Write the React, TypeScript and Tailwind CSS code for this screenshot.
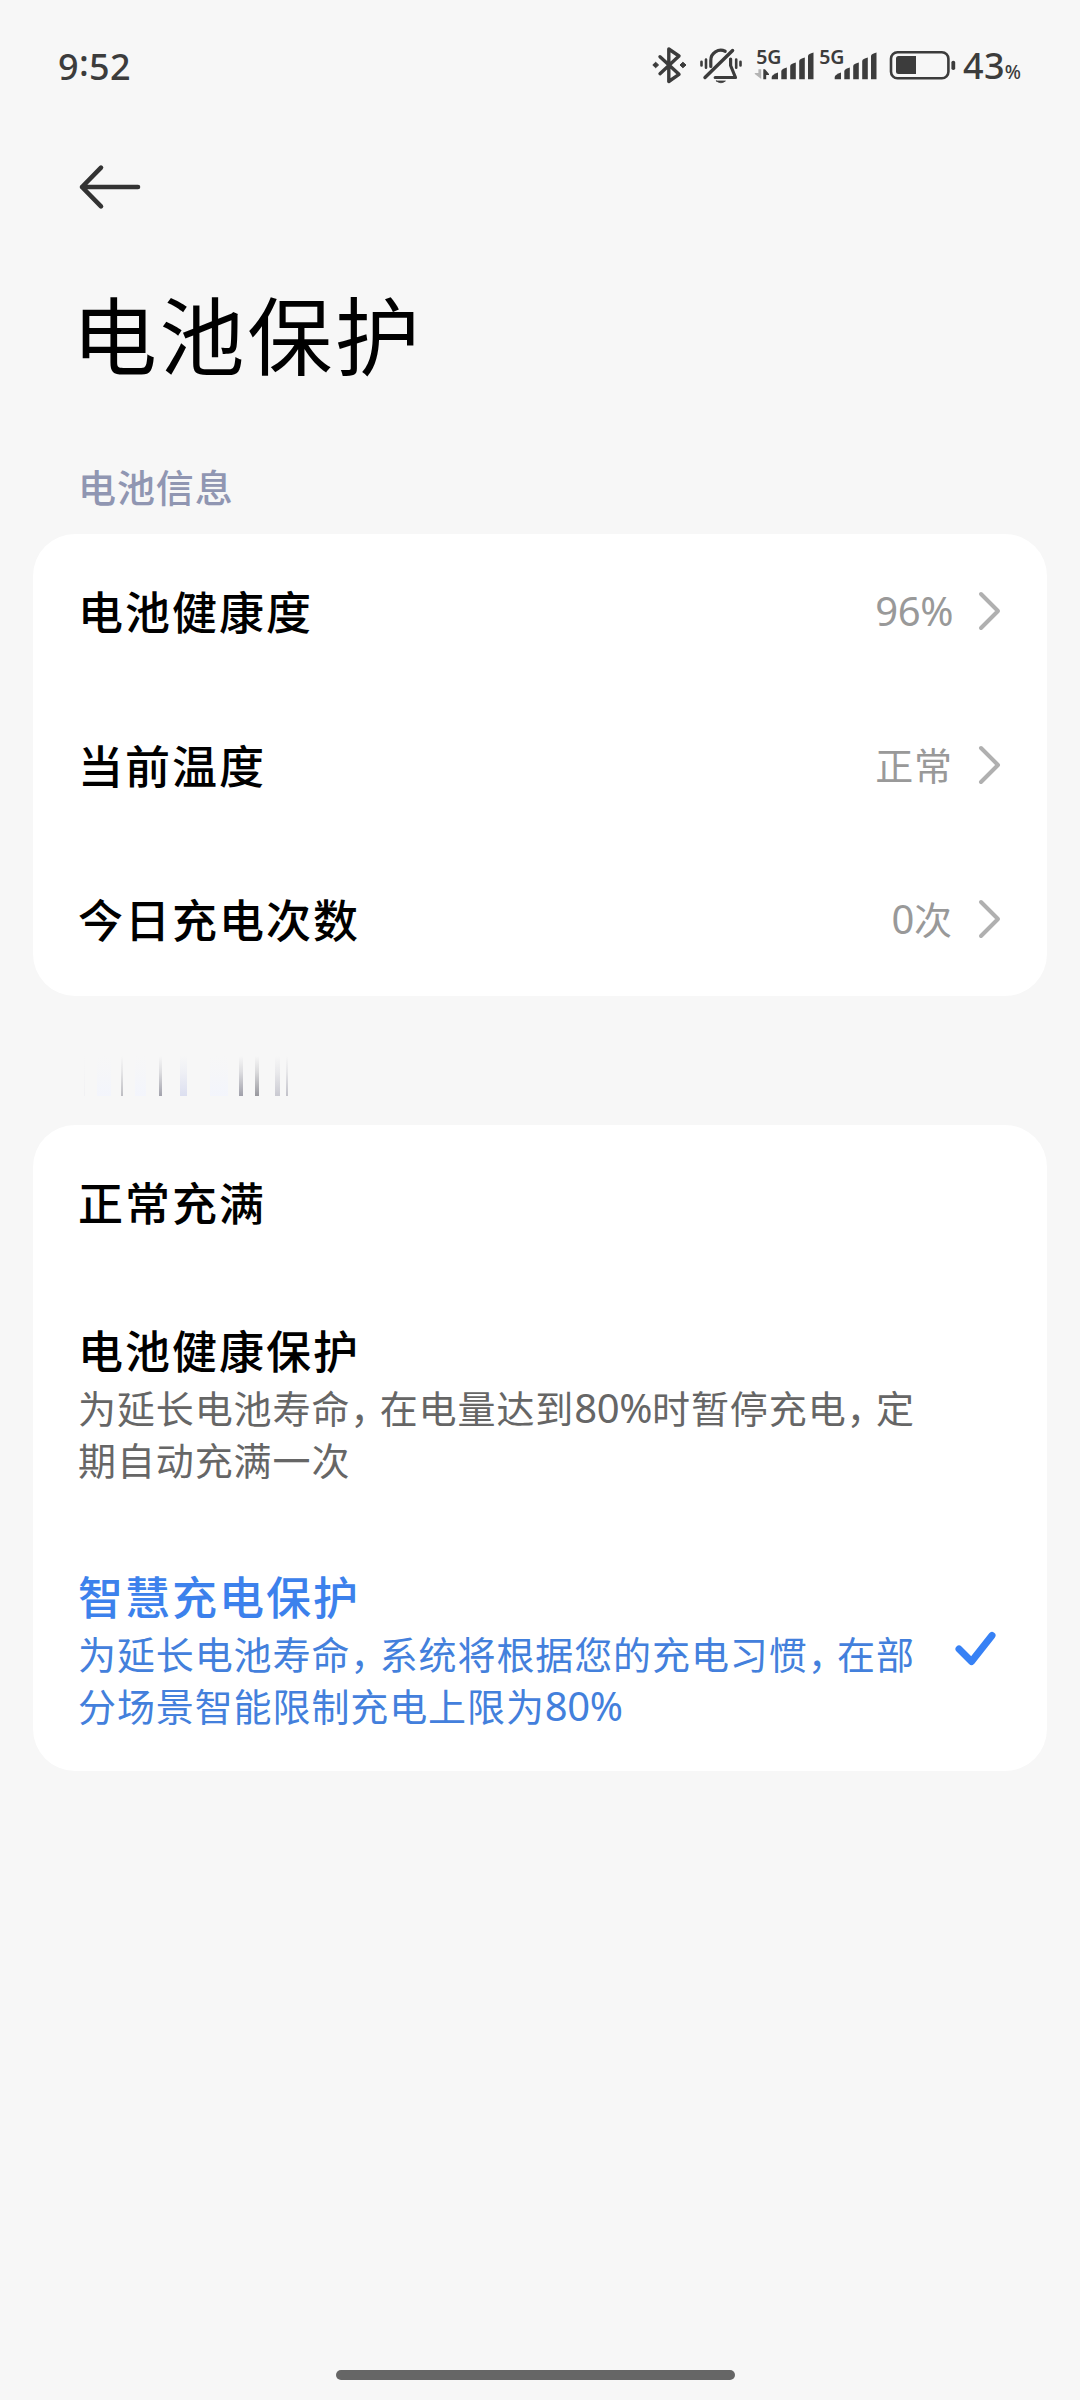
import { Fragment } from 'react';
import clsx from 'clsx';

const infoRows = [
  { label: '电池健康度', value: '96%' },
  { label: '当前温度', value: '正常' },
  { label: '今日充电次数', value: '0次' },
];

const modes = [
  { title: '正常充满', lines: [], selected: false },
  {
    title: '电池健康保护',
    lines: ['为延长电池寿命，在电量达到80%时暂停充电，定', '期自动充满一次'],
    selected: false,
  },
  {
    title: '智慧充电保护',
    lines: ['为延长电池寿命，系统将根据您的充电习惯，在部', '分场景智能限制充电上限为80%'],
    selected: true,
  },
];

export default function App() {
  return (
    <div className="flex h-[2400px] w-[1080px] flex-col overflow-hidden bg-[#f7f7f7] font-['Noto_Sans','Noto_Sans_CJK_SC',sans-serif] text-black">
      <StatusBar />

      <header className="pl-[76px] pt-[30px]">
        <BackArrow />
        <h1 className="-ml-[4px] mt-[58px] font-['Noto_Sans_CJK_SC',sans-serif] text-[85px] leading-[120px] tracking-[2.6px]">
          电池保护
        </h1>
      </header>

      <main className="mt-[68px] px-[33px]">
        <h2 className="pl-[45px] font-['Noto_Sans_CJK_SC',sans-serif] text-[38px] font-medium leading-[52px] tracking-[0.9px] text-[#9096b2]">
          电池信息
        </h2>

        <section className="mt-[22px] rounded-[42px] bg-white">
          {infoRows.map((row) => (
            <InfoRow key={row.label} {...row} />
          ))}
        </section>

        <FadedLabel />

        <section className="rounded-[42px] bg-white">
          {modes.map((mode) => (
            <ModeRow key={mode.title} {...mode} />
          ))}
        </section>
      </main>

      <div className="mb-[20px] ml-[336px] mt-auto h-[10px] w-[399px] rounded-full bg-[#666]" />
    </div>
  );
}

function StatusBar() {
  return (
    <div className="flex h-[130px] items-center pl-[58px] pt-[2px] text-[#3c3c3c]">
      <div className="flex w-[594px] pt-[1px] text-[36px] font-medium leading-[40px] tracking-[0.3px]">
        <span>9</span>
        <span className="-mt-[4px]">:</span>
        <span>52</span>
      </div>
      <BluetoothIcon />
      <BellOffIcon />
      <SignalIcon active />
      <SignalIcon />
      <BatteryIcon />
      <div className="ml-[4px] flex items-baseline pt-[5px] font-medium leading-[40px]">
        <span className="text-[36px] tracking-[0.3px]">43</span>
        <span className="text-[19px]">%</span>
      </div>
    </div>
  );
}

function InfoRow({ label, value }: { label: string; value: string }) {
  return (
    <div className="flex h-[154px] items-center pl-[45px] pr-[44px]">
      <span className="flex-1 font-['Noto_Sans_CJK_SC',sans-serif] text-[45px] font-medium tracking-[2px]">{label}</span>
      <span className="text-[38px] tracking-[0.9px] text-[#999]">
        <MixedText text={value} />
      </span>
      <svg className="ml-[24px]" width="26" height="42" viewBox="0 0 26 42" fill="none">
        <path d="M4 4L21 21L4 38" stroke="#b0b0b0" strokeWidth="4" strokeLinecap="round" strokeLinejoin="round" />
      </svg>
    </div>
  );
}

function ModeRow({ title, lines, selected }: { title: string; lines: string[]; selected: boolean }) {
  const simple = lines.length === 0;
  return (
    <div className={clsx('flex items-center pl-[45px] pr-[49px]', simple ? 'h-[154px]' : 'h-[246px]')}>
      <div className={clsx('flex-1', !simple && 'pt-[2px]')}>
        <div
          className={clsx(
            "font-['Noto_Sans_CJK_SC',sans-serif] text-[45px] font-medium leading-[60px] tracking-[2px]",
            !simple && 'mb-[2px]',
            selected && 'text-[#3c81ec]',
          )}
        >
          {title}
        </div>
        {lines.map((line) => (
          <div
            key={line}
            className={clsx(
              'h-[52px] whitespace-nowrap text-[38px] leading-[52px] tracking-[0.9px]',
              selected ? 'text-[#4380dc]' : 'text-[#666]',
            )}
          >
            <MixedText text={line} />
          </div>
        ))}
      </div>
      {selected && (
        <svg width="46" height="40" viewBox="0 0 46 40" fill="none">
          <path d="M7 21L19.5 33.5L40 7.5" stroke="#3781f5" strokeWidth="7" strokeLinecap="round" strokeLinejoin="round" />
        </svg>
      )}
    </div>
  );
}

// Numbers are set slightly larger than the hanzi, and full-width commas are tightened.
function MixedText({ text }: { text: string }) {
  return (
    <>
      {text.split(/(\d+%?|，)/).map((part, i) => {
        if (part === '，') return <span key={i} className="tracking-[-8.6px]">{part}</span>;
        if (/\d/.test(part)) return <span key={i} className="text-[40px] tracking-[-0.4px]">{part}</span>;
        return <Fragment key={i}>{part}</Fragment>;
      })}
    </>
  );
}

const streaks = [
  { x: 6, w: 1, color: '#f1f1f3' },
  { x: 19, w: 14, color: '#f3f5fc' },
  { x: 43, w: 2, color: '#bdbdc2' },
  { x: 57, w: 11, color: '#f3f5fc' },
  { x: 81, w: 3, color: '#a2a2ac' },
  { x: 102, w: 7, color: '#dcdff0' },
  { x: 132, w: 18, color: '#f3f5fc' },
  { x: 161, w: 4, color: '#a0a0aa' },
  { x: 177, w: 4, color: '#98989e' },
  { x: 197, w: 5, color: '#cacad2' },
  { x: 208, w: 2, color: '#c2c2ca' },
];

// Section label that is still fading in: only its vertical strokes show.
function FadedLabel() {
  return (
    <div className="h-[129px] pl-[45px] pt-[60px]">
      <svg width="240" height="40" viewBox="0 0 240 40">
        <defs>
          <linearGradient id="reveal" x1="0" y1="0" x2="0" y2="1">
            <stop offset="0" stopColor="#f7f7f7" />
            <stop offset="0.4" stopColor="#f7f7f7" stopOpacity="0.7" />
            <stop offset="1" stopColor="#f7f7f7" stopOpacity="0" />
          </linearGradient>
        </defs>
        {streaks.map((s) => (
          <rect key={s.x} x={s.x} y="0" width={s.w} height="40" fill={s.color} />
        ))}
        <rect width="240" height="40" fill="url(#reveal)" />
      </svg>
    </div>
  );
}

function BackArrow() {
  return (
    <svg width="70" height="54" viewBox="0 0 70 54" fill="none" stroke="#333" strokeWidth="4.6" strokeLinecap="round" strokeLinejoin="round">
      <path d="M25 7.7L6 27L25 46.3M6 27H62" />
    </svg>
  );
}

function BluetoothIcon() {
  return (
    <svg width="36" height="40" viewBox="0 0 36 40" fill="none">
      <path d="M8 10.7L27 28.3L16.8 35.5V3L27 10L8 27.7" stroke="currentColor" strokeWidth="3.4" strokeLinecap="round" strokeLinejoin="round" />
      <path d="M3.6 16.2L6.6 19L3.6 21.8L0.8 19ZM30.9 16.2L34 19L30.9 21.8L28 19Z" fill="currentColor" stroke="currentColor" strokeLinejoin="round" />
    </svg>
  );
}

function BellOffIcon() {
  return (
    <svg className="ml-[12px]" width="42" height="40" viewBox="0 0 42 40" fill="none" stroke="currentColor" strokeLinecap="round" strokeLinejoin="round">
      <path d="M5 31.5L32.6 4.5" strokeWidth="3.4" />
      <path d="M10.8 20.5V14.5A10 10 0 0 1 25.2 5.3" strokeWidth="3.2" />
      <path d="M30.6 13V19.5L35.5 31.5H15.2" strokeWidth="3.2" />
      <path d="M16.4 35H25.4Q21 38.6 16.4 35Z" fill="currentColor" strokeWidth="0.8" />
      <path d="M1.5 15.8V19.4M6 13.5V21.8M36.2 13.5V21.8M40.5 15.8V19.4" strokeWidth="2.6" />
    </svg>
  );
}

function SignalIcon({ active }: { active?: boolean }) {
  return (
    <svg
      className={clsx('overflow-visible', active ? 'ml-[12px]' : 'ml-[3px]')}
      width="60"
      height="40"
      viewBox="0 0 60 40"
      fill="currentColor"
    >
      <text x="2.2" y="18.2" className="text-[19.5px] font-semibold">5G</text>
      {active && (
        <>
          <path d="M7.2 23.3V33L0.8 28V27H4.4V23.3Z" fill="#b4b4b4" />
          <path d="M9.3 33.3V23.3H11L15 28V29H12.2V33.3Z" />
        </>
      )}
      <path d="M17.7 33.3V31Q18 28.5 24 26.5V33.3Z" />
      <path d="M27.3 33.3V25Q27.8 22.8 32.8 21.5V33.3Z" />
      <path d="M36.2 33.3V20Q36.6 17.8 41.8 16.6V33.3Z" />
      <path d="M45.2 33.3V15Q45.6 12.8 50.8 11.6V33.3Z" />
      <path d="M54 33.3V10Q54.4 7.8 59.5 6.6V33.3Z" />
    </svg>
  );
}

function BatteryIcon() {
  return (
    <svg className="ml-[11px]" width="71" height="40" viewBox="0 0 71 40">
      <rect x="3" y="6.3" width="57.4" height="26" rx="6.5" fill="none" stroke="currentColor" strokeWidth="2.6" />
      <path d="M28 10V28H10.5Q8 28 8 25.5V12.5Q8 10 10.5 10Z" fill="currentColor" />
      <rect x="63.4" y="14.7" width="3.8" height="9.3" rx="1.8" fill="currentColor" />
    </svg>
  );
}
